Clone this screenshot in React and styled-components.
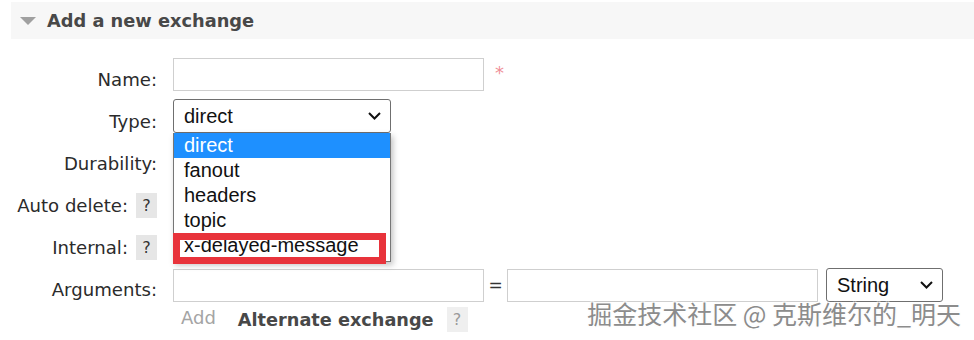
import React from "react";
import styled, { createGlobalStyle } from "styled-components";

const GlobalStyle = createGlobalStyle`
  body {
    margin: 0;
    background: #fff;
    font-family: "DejaVu Sans", Verdana, sans-serif;
  }
`;

const Page = styled.div`
  position: relative;
  width: 974px;
  height: 340px;
  padding: 2px 0 0 11px;
  box-sizing: border-box;
  overflow: hidden;
`;

const Header = styled.div`
  display: flex;
  align-items: center;
  gap: 11px;
  height: 37px;
  padding-left: 9px;
  background: #f7f7f7;
`;

const Triangle = styled.span`
  width: 0;
  height: 0;
  border-left: 8px solid transparent;
  border-right: 8px solid transparent;
  border-top: 8px solid #a0a0a0;
`;

const Title = styled.h2`
  margin: 0;
  font-size: 17.8px;
  font-weight: bold;
  color: #484848;
`;

const Form = styled.div`
  display: grid;
  grid-template-columns: 146px 1fr;
  grid-auto-rows: 42px;
  column-gap: 16px;
  margin-top: 19px;
`;

const Label = styled.div`
  display: flex;
  justify-content: flex-end;
  align-items: center;
  gap: 8px;
  height: 42px;
  padding-top: 1px;
  box-sizing: border-box;
  font-size: 18.1px;
  color: #2b2b2b;
  white-space: nowrap;
`;

const Help = styled.span`
  display: inline-flex;
  align-items: center;
  justify-content: center;
  width: 21px;
  height: 25px;
  background: ${({ $faded }) => ($faded ? "#efefef" : "#e6e6e6")};
  color: ${({ $faded }) => ($faded ? "#9a9a9a" : "#333")};
  font-size: 16px;
`;

const Cell = styled.div`
  position: relative;
  display: flex;
  flex-direction: ${({ $column }) => ($column ? "column" : "row")};
  align-items: flex-start;
  gap: ${({ $column }) => ($column ? 0 : 9)}px;
`;

const TextInput = styled.div`
  width: 311px;
  height: 33px;
  border: 1px solid #cfcfcf;
  box-sizing: border-box;
  background: #fff;
`;

const Star = styled.span`
  margin-top: 4px;
  margin-left: 2px;
  color: #ef8f98;
  font-size: 18px;
`;

const Select = styled.div`
  display: flex;
  align-items: center;
  justify-content: space-between;
  width: ${({ $w }) => $w}px;
  height: 34px;
  margin-top: ${({ $top }) => $top || 0}px;
  padding: 0 9px 0 10px;
  box-sizing: border-box;
  border: 1px solid #6f6f6f;
  border-radius: 3px;
  background: #fff;
  font-family: "Liberation Sans", Arial, sans-serif;
  font-size: 20px;
  color: #111;
`;

const Chevron = () => (
  <svg width="13" height="8" viewBox="0 0 13 8">
    <polyline points="1,1 6.5,6.5 12,1" fill="none" stroke="#111" strokeWidth="2" />
  </svg>
);

const List = styled.div`
  position: absolute;
  left: 0;
  top: 33px;
  width: 218px;
  height: 129px;
  box-sizing: border-box;
  border: 1px solid #767676;
  border-top: none;
  background: #fff;
  box-shadow: 2px 3px 6px rgba(0, 0, 0, 0.25);
  z-index: 2;
`;

const Option = styled.div`
  height: 25px;
  line-height: 25px;
  padding-left: 10px;
  font-family: "Liberation Sans", Arial, sans-serif;
  font-size: 20px;
  background: ${({ $active }) => ($active ? "#1e90ff" : "transparent")};
  color: ${({ $active }) => ($active ? "#fff" : "#111")};
`;

const Marker = styled.div`
  position: absolute;
  left: -1px;
  top: 100px;
  width: 213px;
  height: 31px;
  border: 7px solid #e8333b;
  box-sizing: border-box;
`;

const ArgRow = styled.div`
  display: flex;
  align-items: center;
`;

const Equals = styled.span`
  width: 23px;
  text-align: center;
  font-size: 17px;
  color: #333;
`;

const SubRow = styled.div`
  display: flex;
  align-items: center;
  margin-top: 5px;
  padding-left: 8px;
`;

const AddLink = styled.span`
  font-size: 18px;
  color: #a4a4a4;
  margin-right: 22px;
  margin-top: -4px;
`;

const Alternate = styled.span`
  font-size: 17.7px;
  font-weight: bold;
  color: #484848;
  margin-right: 13px;
`;

const Watermark = styled.div`
  position: absolute;
  right: 13px;
  top: 295px;
  font-family: "Noto Sans CJK SC", "Noto Sans", sans-serif;
  font-size: 25px;
  color: #8c8c8c;
  text-shadow: 1px 1px 0 #fff, -1px -1px 0 #fff, 1px -1px 0 #fff, -1px 1px 0 #fff,
    0 0 2px rgba(0, 0, 0, 0.15);
  white-space: nowrap;
`;

const options = ["direct", "fanout", "headers", "topic", "x-delayed-message"];

export default function App() {
  return (
    <>
      <GlobalStyle />
      <Page>
        <Header>
          <Triangle />
          <Title>Add a new exchange</Title>
        </Header>
        <Form>
          <Label>Name:</Label>
          <Cell>
            <TextInput />
            <Star>*</Star>
          </Cell>

          <Label>Type:</Label>
          <Cell>
            <Select $w={218} $top={-1}>
              direct
              <Chevron />
            </Select>
            <List>
              {options.map((o, i) => (
                <Option key={o} $active={i === 0}>
                  {o}
                </Option>
              ))}
              <Marker />
            </List>
          </Cell>

          <Label>Durability:</Label>
          <Cell />

          <Label>
            Auto delete: <Help>?</Help>
          </Label>
          <Cell />

          <Label>
            Internal: <Help>?</Help>
          </Label>
          <Cell />

          <Label>Arguments:</Label>
          <Cell $column>
            <ArgRow>
              <TextInput />
              <Equals>=</Equals>
              <TextInput />
              <Select $w={117} style={{ marginLeft: 8 }}>
                String
                <Chevron />
              </Select>
            </ArgRow>
            <SubRow>
              <AddLink>Add</AddLink>
              <Alternate>Alternate exchange</Alternate>
              <Help $faded>?</Help>
            </SubRow>
          </Cell>
        </Form>
        <Watermark>掘金技术社区 @ 克斯维尔的_明天</Watermark>
      </Page>
    </>
  );
}
